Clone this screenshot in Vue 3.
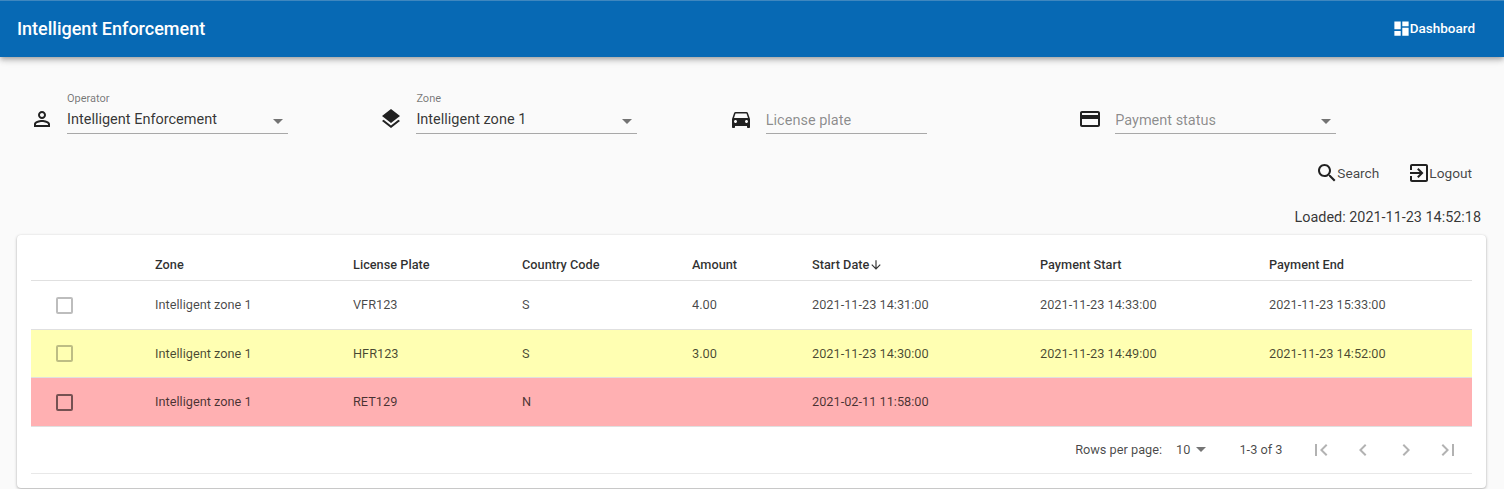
<script setup>
const filters = [
  { key: 'op', label: 'Operator', value: 'Intelligent Enforcement', width: 221, select: true, icon: 'M12 6c1.1 0 2 .9 2 2s-.9 2-2 2-2-.9-2-2 .9-2 2-2m0 9c2.7 0 5.8 1.29 6 2v1H6v-.99c.2-.72 3.3-2.01 6-2.01m0-11C9.79 4 8 5.79 8 8s1.79 4 4 4 4-1.79 4-4-1.79-4-4-4zm0 9c-2.67 0-8 1.34-8 4v3h16v-3c0-2.66-5.33-4-8-4z' },
  { key: 'zone', label: 'Zone', value: 'Intelligent zone 1', width: 221, select: true, icon: 'M11.99 18.54l-7.37-5.73L3 14.07l9 7 9-7-1.63-1.27-7.38 5.74zM12 16l7.36-5.73L21 9l-9-7-9 7 1.63 1.27L12 16z' },
  { key: 'lp', placeholder: 'License plate', width: 161, select: false, icon: 'M18.92 6.01C18.72 5.42 18.16 5 17.5 5h-11c-.66 0-1.21.42-1.42 1.01L3 12v8c0 .55.45 1 1 1h1c.55 0 1-.45 1-1v-1h12v1c0 .55.45 1 1 1h1c.55 0 1-.45 1-1v-8l-2.08-5.99zM6.5 16c-.83 0-1.5-.67-1.5-1.5S5.67 13 6.5 13s1.5.67 1.5 1.5S7.33 16 6.5 16zm11 0c-.83 0-1.5-.67-1.5-1.5s.67-1.5 1.5-1.5 1.5.67 1.5 1.5-.67 1.5-1.5 1.5zM5 11l1.5-4.5h11L19 11H5z' },
  { key: 'pay', placeholder: 'Payment status', width: 221, select: true, icon: 'M20 4H4c-1.11 0-1.99.89-1.99 2L2 18c0 1.11.89 2 2 2h16c1.11 0 2-.89 2-2V6c0-1.11-.89-2-2-2zm0 14H4v-6h16v6zm0-10H4V6h16v2z' }
]
const columns = ['', 'Zone', 'License Plate', 'Country Code', 'Amount', 'Start Date', 'Payment Start', 'Payment End']
const rows = [
  { id: 1, tone: '', cells: ['Intelligent zone 1', 'VFR123', 'S', '4.00', '2021-11-23 14:31:00', '2021-11-23 14:33:00', '2021-11-23 15:33:00'] },
  { id: 2, tone: 'yellow', cells: ['Intelligent zone 1', 'HFR123', 'S', '3.00', '2021-11-23 14:30:00', '2021-11-23 14:49:00', '2021-11-23 14:52:00'] },
  { id: 3, tone: 'red', cells: ['Intelligent zone 1', 'RET129', 'N', '', '2021-02-11 11:58:00', '', ''] }
]
const pager = [
  'M18.41 16.59L13.82 12l4.59-4.59L17 6l-6 6 6 6zM6 6h2v12H6z',
  'M15.41 7.41L14 6l-6 6 6 6 1.41-1.41L10.83 12z',
  'M10 6L8.59 7.41 13.17 12l-4.58 4.59L10 18l6-6z',
  'M5.59 7.41L10.18 12l-4.59 4.59L7 18l6-6-6-6zM16 6h2v12h-2z'
]
</script>

<template>
  <div class="page">
    <header class="bar">
      <span class="title">Intelligent Enforcement</span>
      <span class="dash">
        <svg viewBox="0 0 24 24" class="dash-icon"><path d="M3 13h8V3H3v10zm0 8h8v-6H3v6zm10 0h8V11h-8v10zm0-18v6h8V3h-8z" /></svg>
        Dashboard
      </span>
    </header>

    <section class="filters">
      <div v-for="f in filters" :key="f.key" class="filter">
        <svg viewBox="0 0 24 24" class="ficon"><path :d="f.icon" /></svg>
        <div class="field" :class="{ empty: !f.value }" :style="{ width: f.width + 'px' }">
          <span class="flabel">{{ f.label }}</span>
          <span class="fvalue">{{ f.value || f.placeholder }}</span>
          <i v-if="f.select" class="caret"></i>
        </div>
      </div>
    </section>

    <div class="actions">
      <span class="action">
        <svg viewBox="0 0 24 24"><path d="M15.5 14h-.79l-.28-.27C15.41 12.59 16 11.11 16 9.5 16 5.91 13.09 3 9.5 3S3 5.91 3 9.5 5.91 16 9.5 16c1.61 0 3.09-.59 4.23-1.57l.27.28v.79l5 4.99L20.49 19l-4.99-5zm-6 0C7.01 14 5 11.99 5 9.5S7.01 5 9.5 5 14 7.01 14 9.5 11.99 14 9.5 14z" /></svg>
        Search
      </span>
      <span class="action">
        <svg viewBox="0 0 24 24"><path d="M10.09 15.59L11.5 17l5-5-5-5-1.41 1.41L12.67 11H3v2h9.67l-2.58 2.59zM19 3H5c-1.11 0-2 .9-2 2v4h2V5h14v14H5v-4H3v4c0 1.1.89 2 2 2h14c1.1 0 2-.9 2-2V5c0-1.1-.9-2-2-2z" /></svg>
        Logout
      </span>
    </div>

    <div class="loaded">Loaded: 2021-11-23 14:52:18</div>

    <section class="card">
      <div class="grid head">
        <div v-for="c in columns" :key="c" class="hcell">
          {{ c }}
          <svg v-if="c === 'Start Date'" viewBox="0 0 24 24" class="sort"><path d="M20 12l-1.41-1.41L13 16.17V4h-2v12.17l-5.58-5.59L4 12l8 8 8-8z" /></svg>
        </div>
      </div>
      <div v-for="r in rows" :key="r.id" class="grid row" :class="r.tone">
        <div class="check"><span class="box"></span></div>
        <div v-for="(c, i) in r.cells" :key="i">{{ c }}</div>
      </div>
      <footer class="pagination">
        <span>Rows per page:</span>
        <span class="size">10<i class="caret small"></i></span>
        <span class="range">1-3 of 3</span>
        <div class="pager">
          <svg v-for="p in pager" :key="p" viewBox="0 0 24 24"><path :d="p" /></svg>
        </div>
      </footer>
    </section>
  </div>
</template>

<style>
html, body { margin: 0; background: #fafafa; }
</style>

<style scoped>
.page {
  height: 489px;
  overflow: hidden;
  background: #fafafa;
  font-family: Roboto, "Liberation Sans", sans-serif;
  color: rgba(0, 0, 0, 0.87);
}
.bar {
  height: 57px;
  box-sizing: border-box;
  padding: 0 29px 2px 17px;
  display: flex;
  align-items: center;
  justify-content: space-between;
  background: #0769b4;
  border-top: 1px solid #3f87bf;
  color: #fff;
  box-shadow: 0 2px 4px -1px rgba(0,0,0,.2), 0 4px 5px rgba(0,0,0,.14), 0 1px 10px rgba(0,0,0,.12);
}
.title { font-size: 18px; font-weight: 500; }
.dash { display: flex; align-items: center; font-size: 13.5px; font-weight: 500; }
.dash-icon { width: 19px; height: 19px; fill: #fff; margin-right: -1px; }
.filters {
  display: grid;
  grid-template-columns: repeat(4, 349.4px);
  padding: 33px 0 0 30px;
}
.filter { display: flex; align-items: flex-start; }
.ficon { width: 24px; height: 24px; margin-right: 13px; margin-top: 17px; fill: rgba(0,0,0,.87); flex: none; }
.field {
  position: relative;
  height: 44px;
  box-sizing: border-box;
  border-bottom: 1px solid #a8a8a8;
  font-size: 14.5px;
}
.flabel { display: block; height: 18px; line-height: 18px; font-size: 11px; color: rgba(0,0,0,.54); }
.fvalue { display: block; line-height: 24px; color: rgba(0,0,0,.8); }
.empty .fvalue { color: rgba(0,0,0,.46); margin-top: 1px; }
.caret {
  position: absolute;
  right: 5px;
  top: 29px;
  border-left: 5px solid transparent;
  border-right: 5px solid transparent;
  border-top: 5px solid rgba(0,0,0,.54);
}
.caret.small { position: static; display: inline-block; margin-left: 6px; vertical-align: 2px; }
.actions {
  display: flex;
  justify-content: flex-end;
  gap: 28px;
  padding: 28px 32px 0 0;
  height: 22px;
}
.action { display: flex; align-items: center; font-size: 13.7px; color: rgba(0,0,0,.74); height: 22px; }
.action svg { width: 24px; height: 24px; flex: none; fill: rgba(0,0,0,.87); margin-right: -2px; }
.loaded {
  margin-top: 24px;
  padding-right: 23px;
  text-align: right;
  font-size: 14.4px;
  line-height: 20px;
  color: rgba(0,0,0,.8);
}
.card {
  height: 253px;
  box-sizing: border-box;
  margin: 7px 0 0 17px;
  padding: 0 14px;
  background: #fff;
  border-radius: 4px;
  box-shadow: 0 1px 3px rgba(0,0,0,.3), 0 0 1px rgba(0,0,0,.08);
  width: 1469px;
}
.grid {
  display: grid;
  grid-template-columns: 124px 198px 169px 170px 120px 228px 229px 1fr;
  align-items: center;
  font-size: 12.75px;
}
.head {
  height: 46px;
  border-bottom: 1px solid #e0e0e0;
  font-weight: 500;
  color: rgba(0,0,0,.82);
  padding-top: 14px;
  box-sizing: border-box;
}
.hcell { display: flex; align-items: center; }
.sort { width: 14px; height: 14px; fill: rgba(0,0,0,.8); }
.row {
  height: 48.5px;
  box-sizing: border-box;
  border-bottom: 1px solid #e0e0e0;
  color: rgba(0,0,0,.72);
}
.yellow { background: #ffffb2; }
.red { background: #ffb0b2; }
.check { display: flex; padding: 1px 0 0 25px; }
.box {
  width: 13px;
  height: 13px;
  border: 2px solid rgba(0,0,0,.26);
  border-radius: 2px;
}
.red .box { border-color: rgba(0,0,0,.54); }
.pagination {
  height: 47px;
  box-sizing: border-box;
  border-bottom: 1px solid #e8e8e8;
  display: flex;
  align-items: center;
  justify-content: flex-end;
  font-size: 12.75px;
  color: rgba(0,0,0,.72);
}
.size { margin-left: 14px; }
.range { margin-left: 33px; }
.pager { display: flex; gap: 18.5px; margin-left: 26px; margin-right: 12px; }
.pager svg { width: 24px; height: 24px; fill: rgba(0,0,0,.3); }
</style>
